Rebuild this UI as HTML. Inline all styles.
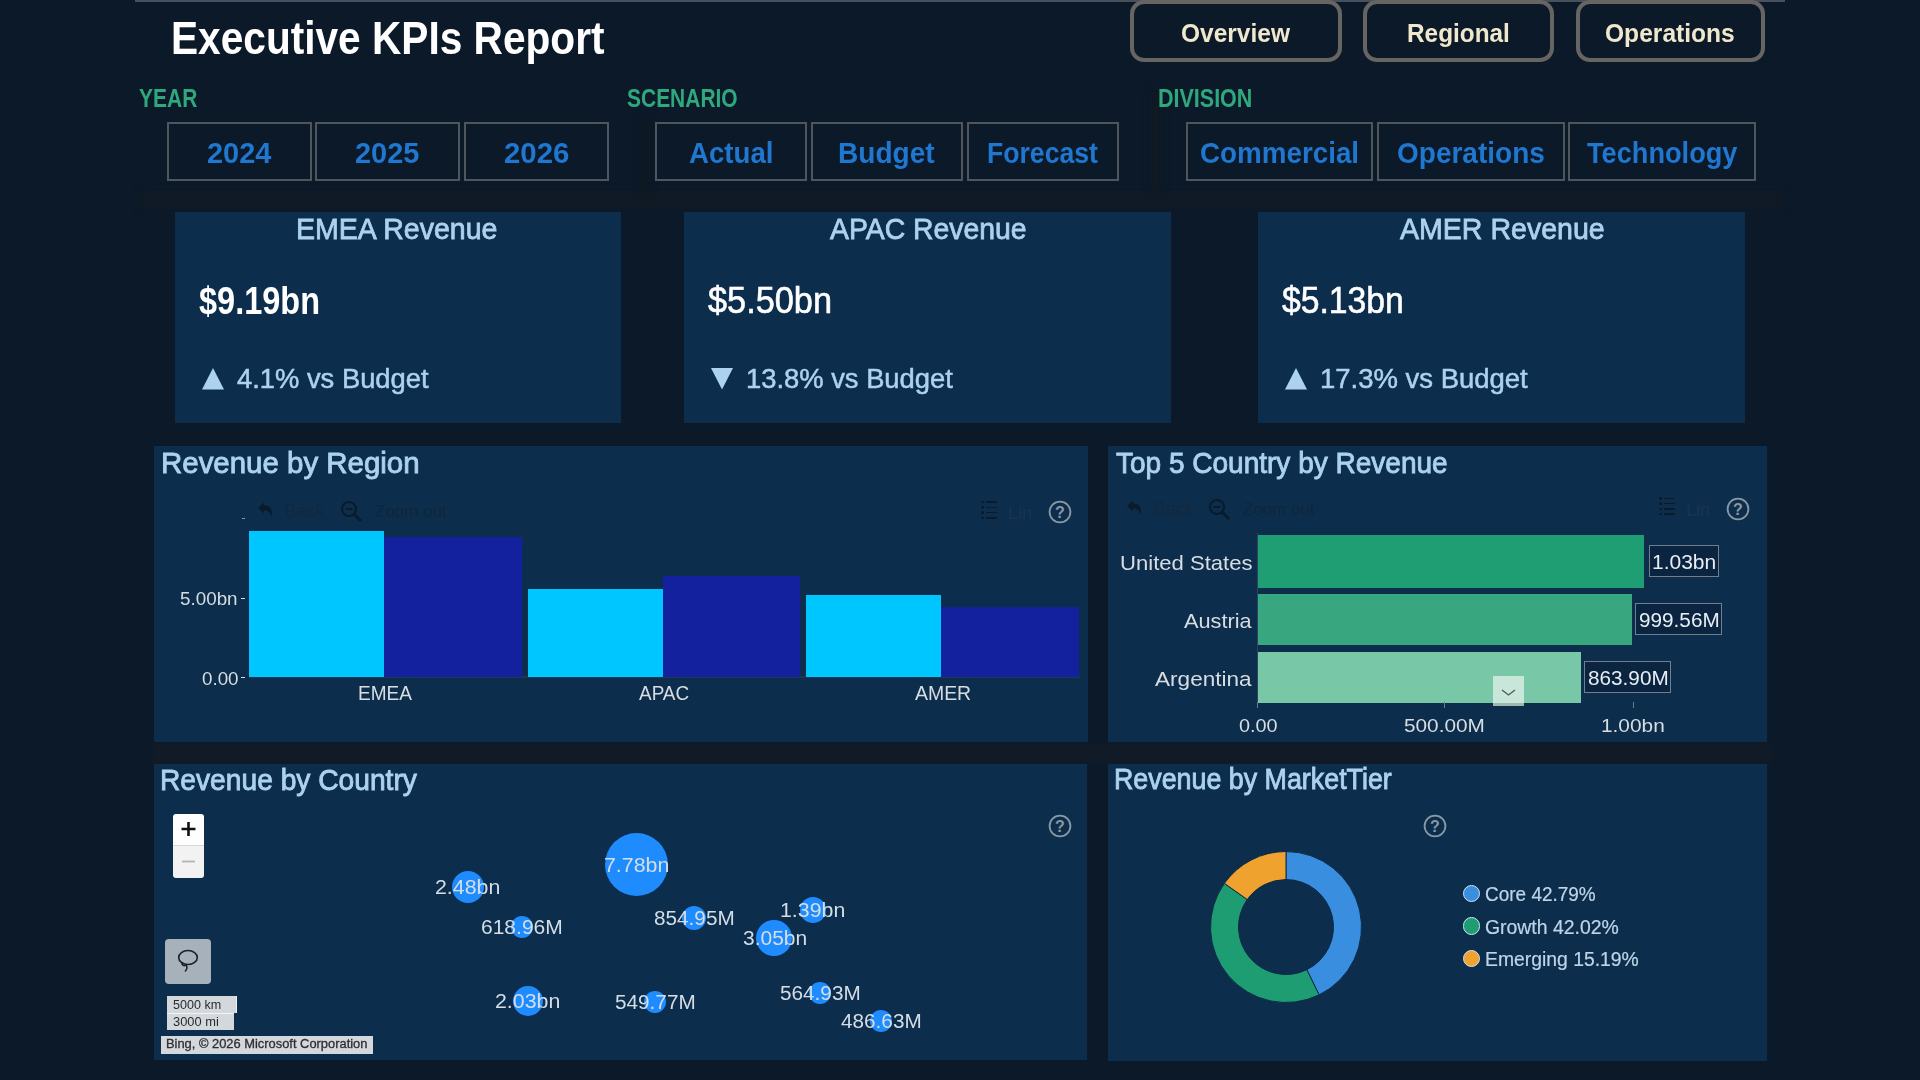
<!DOCTYPE html>
<html><head><meta charset="utf-8"><style>
html,body{margin:0;padding:0;}
body{width:1920px;height:1080px;overflow:hidden;position:relative;background:#0b1929;font-family:"Liberation Sans", sans-serif;}
.t{position:absolute;white-space:nowrap;line-height:1;transform-origin:0 0;}
</style></head><body>
<div style="position:absolute;left:135px;top:0px;width:1650px;height:2px;background:#46515c;"></div><div style="position:absolute;left:139px;top:191px;width:1646px;height:17px;background:#101a25;filter:blur(3px)"></div><div style="position:absolute;left:639px;top:116px;width:11px;height:76px;background:#0f1923;filter:blur(3px)"></div><div style="position:absolute;left:1150px;top:90px;width:12px;height:102px;background:#0f1923;filter:blur(3px)"></div><div style="position:absolute;left:1130px;top:0px;width:204px;height:54px;border:4px solid #676562;border-radius:14px;"></div><div style="position:absolute;left:1363px;top:0px;width:183px;height:54px;border:4px solid #676562;border-radius:14px;"></div><div style="position:absolute;left:1576px;top:0px;width:181px;height:54px;border:4px solid #676562;border-radius:14px;"></div><div style="position:absolute;left:167px;top:122px;width:141px;height:55px;border:2px solid #50565d;"></div><div style="position:absolute;left:315px;top:122px;width:141px;height:55px;border:2px solid #50565d;"></div><div style="position:absolute;left:464px;top:122px;width:141px;height:55px;border:2px solid #50565d;"></div><div style="position:absolute;left:655px;top:122px;width:148px;height:55px;border:2px solid #50565d;"></div><div style="position:absolute;left:811px;top:122px;width:148px;height:55px;border:2px solid #50565d;"></div><div style="position:absolute;left:967px;top:122px;width:148px;height:55px;border:2px solid #50565d;"></div><div style="position:absolute;left:1186px;top:122px;width:183px;height:55px;border:2px solid #50565d;"></div><div style="position:absolute;left:1377px;top:122px;width:184px;height:55px;border:2px solid #50565d;"></div><div style="position:absolute;left:1568px;top:122px;width:184px;height:55px;border:2px solid #50565d;"></div><div style="position:absolute;left:175px;top:212px;width:446px;height:211px;background:#0c2e4c;"></div><svg style="position:absolute;left:202.2px;top:367.5px" width="23" height="22"><polygon points="11,0 22,21.6 0,21.6" fill="#acd2f0"/></svg><div style="position:absolute;left:684px;top:212px;width:487px;height:211px;background:#0c2e4c;"></div><svg style="position:absolute;left:711.3px;top:367.7px" width="23" height="22"><polygon points="0,0 22,0 11,21.5" fill="#acd2f0"/></svg><div style="position:absolute;left:1258px;top:212px;width:487px;height:211px;background:#0c2e4c;"></div><svg style="position:absolute;left:1284.5px;top:367.5px" width="23" height="22"><polygon points="11,0 22,21.6 0,21.6" fill="#acd2f0"/></svg><div style="position:absolute;left:152px;top:742px;width:1620px;height:22px;background:#111b27;filter:blur(1.5px)"></div><div style="position:absolute;left:154px;top:446px;width:934px;height:296px;background:#0c2e4c;"></div><div style="position:absolute;left:1108px;top:446px;width:659px;height:296px;background:#0c2e4c;"></div><div style="position:absolute;left:154px;top:764px;width:933px;height:296px;background:#0c2e4c;"></div><div style="position:absolute;left:1108px;top:764px;width:659px;height:297px;background:#0c2e4c;"></div><div style="position:absolute;left:249px;top:676px;width:831px;height:2px;background:#1c3752;"></div><div style="position:absolute;left:249px;top:531px;width:135px;height:146px;background:#00c6ff;"></div><div style="position:absolute;left:384px;top:537px;width:138px;height:140px;background:#13219e;"></div><div style="position:absolute;left:528px;top:589px;width:135px;height:88px;background:#00c6ff;"></div><div style="position:absolute;left:663px;top:576px;width:137px;height:101px;background:#13219e;"></div><div style="position:absolute;left:806px;top:595px;width:135px;height:82px;background:#00c6ff;"></div><div style="position:absolute;left:941px;top:607px;width:138px;height:70px;background:#13219e;"></div><div style="position:absolute;left:241px;top:598px;width:4px;height:1px;background:#d8dde2;"></div><div style="position:absolute;left:241px;top:677px;width:4px;height:1px;background:#d8dde2;"></div><div style="position:absolute;left:1257px;top:535px;width:387px;height:53px;background:#1e9e72;"></div><div style="position:absolute;left:1257px;top:594px;width:375px;height:51px;background:#38a67e;"></div><div style="position:absolute;left:1257px;top:652px;width:324px;height:51px;background:#78c8a8;"></div><div style="position:absolute;left:1257px;top:533px;width:1px;height:174px;background:#2b4460;"></div><div style="position:absolute;left:1444px;top:702px;width:1px;height:6px;background:#6a7d90;"></div><div style="position:absolute;left:1633px;top:702px;width:1px;height:6px;background:#6a7d90;"></div><div style="position:absolute;left:1257px;top:702px;width:1px;height:6px;background:#6a7d90;"></div><div style="position:absolute;left:1649px;top:545px;width:68px;height:30px;border:1px solid #6f7f8e;background:#0b2440"></div><div style="position:absolute;left:1635px;top:603px;width:85px;height:30px;border:1px solid #6f7f8e;background:#0b2440"></div><div style="position:absolute;left:1584px;top:661px;width:85px;height:30px;border:1px solid #6f7f8e;background:#0b2440"></div><div style="position:absolute;left:452px;top:871px;width:32px;height:32px;border-radius:50%;background:#1e8cff"></div><div style="position:absolute;left:511px;top:916px;width:22px;height:22px;border-radius:50%;background:#1e8cff"></div><div style="position:absolute;left:513px;top:986px;width:30px;height:30px;border-radius:50%;background:#1e8cff"></div><div style="position:absolute;left:605.0px;top:833.0px;width:63.0px;height:63.0px;border-radius:50%;background:#1e8cff"></div><div style="position:absolute;left:682px;top:906px;width:24px;height:24px;border-radius:50%;background:#1e8cff"></div><div style="position:absolute;left:800px;top:896.5px;width:26px;height:26px;border-radius:50%;background:#1e8cff"></div><div style="position:absolute;left:756px;top:919.5px;width:36px;height:36px;border-radius:50%;background:#1e8cff"></div><div style="position:absolute;left:644px;top:991px;width:22px;height:22px;border-radius:50%;background:#1e8cff"></div><div style="position:absolute;left:809px;top:982px;width:22px;height:22px;border-radius:50%;background:#1e8cff"></div><div style="position:absolute;left:870px;top:1010px;width:22px;height:22px;border-radius:50%;background:#1e8cff"></div><svg style="position:absolute;left:1186px;top:827px" width="200" height="200" viewBox="-100 -100 200 200"><path d="M0.00,-75.50 A75.5,75.5 0 0 1 33.10,67.86 L20.82,42.69 A47.5,47.5 0 0 0 0.00,-47.50 Z" fill="#3a8ee0" stroke="#0c2a46" stroke-width="1"/><path d="M33.10,67.86 A75.5,75.5 0 0 1 -61.62,-43.63 L-38.77,-27.45 A47.5,47.5 0 0 0 20.82,42.69 Z" fill="#1f9d72" stroke="#0c2a46" stroke-width="1"/><path d="M-61.62,-43.63 A75.5,75.5 0 0 1 -0.00,-75.50 L-0.00,-47.50 A47.5,47.5 0 0 0 -38.77,-27.45 Z" fill="#f0a22e" stroke="#0c2a46" stroke-width="1"/></svg><div style="position:absolute;left:1463px;top:884.6999999999999px;width:15.2px;height:15.2px;border-radius:50%;background:#3a8ee0;border:1.5px solid #cfe2f2"></div><div style="position:absolute;left:1463px;top:917.4px;width:15.2px;height:15.2px;border-radius:50%;background:#1f9d72;border:1.5px solid #cfe2f2"></div><div style="position:absolute;left:1463px;top:949.9px;width:15.2px;height:15.2px;border-radius:50%;background:#f0a22e;border:1.5px solid #cfe2f2"></div><svg style="position:absolute;left:1047.3px;top:498.8px" width="26" height="26"><circle cx="13" cy="13" r="10.4" fill="none" stroke="#8a98a4" stroke-width="1.8"/><text x="13" y="19" text-anchor="middle" font-family="Liberation Sans" font-weight="700" font-size="16" fill="#8a98a4">?</text></svg><svg style="position:absolute;left:1725px;top:496px" width="26" height="26"><circle cx="13" cy="13" r="10.4" fill="none" stroke="#8a98a4" stroke-width="1.8"/><text x="13" y="19" text-anchor="middle" font-family="Liberation Sans" font-weight="700" font-size="16" fill="#8a98a4">?</text></svg><svg style="position:absolute;left:1047px;top:813px" width="26" height="26"><circle cx="13" cy="13" r="10.4" fill="none" stroke="#8a98a4" stroke-width="1.8"/><text x="13" y="19" text-anchor="middle" font-family="Liberation Sans" font-weight="700" font-size="16" fill="#8a98a4">?</text></svg><svg style="position:absolute;left:1422px;top:812.5px" width="26" height="26"><circle cx="13" cy="13" r="10.4" fill="none" stroke="#8a98a4" stroke-width="1.8"/><text x="13" y="19" text-anchor="middle" font-family="Liberation Sans" font-weight="700" font-size="16" fill="#8a98a4">?</text></svg><svg style="position:absolute;left:256px;top:501px" width="20" height="20" viewBox="0 0 20 20"><path d="M2,7 L8,1.5 L8,4.5 C14,4.5 17,8 16,16 C14,11 12,9.5 8,9.5 L8,12.5 Z" fill="#0a1b2c"/></svg><div style="position:absolute;left:285px;top:502px;font-family:Liberation Sans;font-size:18px;line-height:1;color:#122840">Back</div><svg style="position:absolute;left:340px;top:500px" width="24" height="22" viewBox="0 0 24 22"><circle cx="9" cy="9" r="7" fill="none" stroke="#0a1b2c" stroke-width="2.2"/><path d="M5.5,9 H12.5" stroke="#0a1b2c" stroke-width="2"/><path d="M14,14 L21,21" stroke="#0a1b2c" stroke-width="3"/></svg><div style="position:absolute;left:375px;top:503px;font-family:Liberation Sans;font-size:17px;line-height:1;color:#0f263d">Zoom out</div><svg style="position:absolute;left:1125px;top:499px" width="20" height="20" viewBox="0 0 20 20"><path d="M2,7 L8,1.5 L8,4.5 C14,4.5 17,8 16,16 C14,11 12,9.5 8,9.5 L8,12.5 Z" fill="#0a1b2c"/></svg><div style="position:absolute;left:1154px;top:500px;font-family:Liberation Sans;font-size:18px;line-height:1;color:#122840">Back</div><svg style="position:absolute;left:1208px;top:498px" width="24" height="22" viewBox="0 0 24 22"><circle cx="9" cy="9" r="7" fill="none" stroke="#0a1b2c" stroke-width="2.2"/><path d="M5.5,9 H12.5" stroke="#0a1b2c" stroke-width="2"/><path d="M14,14 L21,21" stroke="#0a1b2c" stroke-width="3"/></svg><div style="position:absolute;left:1243px;top:501px;font-family:Liberation Sans;font-size:17px;line-height:1;color:#0f263d">Zoom out</div><div style="position:absolute;left:981px;top:500.7px;width:2.5px;height:2.5px;background:#0a1b2c;border-radius:50%"></div><div style="position:absolute;left:986px;top:501.2px;width:11px;height:1.6px;background:#0a1b2c"></div><div style="position:absolute;left:981px;top:506.0px;width:2.5px;height:2.5px;background:#0a1b2c;border-radius:50%"></div><div style="position:absolute;left:986px;top:506.5px;width:11px;height:1.6px;background:#0a1b2c"></div><div style="position:absolute;left:981px;top:511.29999999999995px;width:2.5px;height:2.5px;background:#0a1b2c;border-radius:50%"></div><div style="position:absolute;left:986px;top:511.79999999999995px;width:11px;height:1.6px;background:#0a1b2c"></div><div style="position:absolute;left:981px;top:516.6px;width:2.5px;height:2.5px;background:#0a1b2c;border-radius:50%"></div><div style="position:absolute;left:986px;top:517.1px;width:11px;height:1.6px;background:#0a1b2c"></div><div style="position:absolute;left:1008px;top:504.2px;font-family:Liberation Sans;font-size:18px;line-height:1;color:#1a3350">Lin</div><div style="position:absolute;left:1659px;top:497.0px;width:2.5px;height:2.5px;background:#0a1b2c;border-radius:50%"></div><div style="position:absolute;left:1664px;top:497.5px;width:11px;height:1.6px;background:#0a1b2c"></div><div style="position:absolute;left:1659px;top:502.3px;width:2.5px;height:2.5px;background:#0a1b2c;border-radius:50%"></div><div style="position:absolute;left:1664px;top:502.8px;width:11px;height:1.6px;background:#0a1b2c"></div><div style="position:absolute;left:1659px;top:507.6px;width:2.5px;height:2.5px;background:#0a1b2c;border-radius:50%"></div><div style="position:absolute;left:1664px;top:508.1px;width:11px;height:1.6px;background:#0a1b2c"></div><div style="position:absolute;left:1659px;top:512.9px;width:2.5px;height:2.5px;background:#0a1b2c;border-radius:50%"></div><div style="position:absolute;left:1664px;top:513.4px;width:11px;height:1.6px;background:#0a1b2c"></div><div style="position:absolute;left:1686px;top:500.5px;font-family:Liberation Sans;font-size:18px;line-height:1;color:#1a3350">Lin</div><div style="position:absolute;left:242px;top:518px;width:3px;height:1px;background:#8a98a4;"></div><div style="position:absolute;left:173px;top:814px;width:31px;height:64px;background:linear-gradient(#fefefe 0 31px,#f2f2f2 31px);border-radius:3px"></div><div style="position:absolute;left:173px;top:845px;width:31px;height:1px;background:#d6d6d6;"></div><svg style="position:absolute;left:173px;top:814px" width="31" height="64"><path d="M15.5,8 V22 M8.5,15 H22.5" stroke="#111" stroke-width="2.6"/><path d="M9,47.5 H22" stroke="#b4b4b4" stroke-width="1.8"/></svg><div style="position:absolute;left:165px;top:939px;width:46px;height:45px;background:#a7b1bb;border-radius:4px"></div><svg style="position:absolute;left:165px;top:939px" width="46" height="45"><ellipse cx="23" cy="18.5" rx="9.3" ry="7" fill="none" stroke="#1b1f24" stroke-width="1.6"/><path d="M17.5,23 C16,26 19,27.5 21,26 C22.5,28 22,30.5 20,32.5" fill="none" stroke="#1b1f24" stroke-width="1.5"/></svg><div style="position:absolute;left:167px;top:996px;width:69.5px;height:17px;background:#d3d8dd;border-right:1px solid #f0f0f0;box-sizing:border-box"></div><div style="position:absolute;left:167px;top:1013px;width:66.5px;height:17px;background:#d3d8dd;border-top:1px solid #f4f4f4;box-sizing:border-box"></div><div style="position:absolute;left:161px;top:1036px;width:212px;height:18px;background:#d3d8dd;"></div><div style="position:absolute;left:1493px;top:676px;width:31px;height:30px;background:#c9e6da"></div><div style="position:absolute;left:1493px;top:703px;width:31px;height:3px;background:#9fb8ae;"></div><svg style="position:absolute;left:1493px;top:676px" width="31" height="30"><path d="M9,14 L15.5,19 L22,14" fill="none" stroke="#4a5a55" stroke-width="1.2"/></svg>
<div class="t" style="left:1180.66px;top:20.29px;font-size:26px;color:#efe8cd;font-weight:700;transform:scaleX(0.9428);">Overview</div><div class="t" style="left:1407.16px;top:20.29px;font-size:26px;color:#efe8cd;font-weight:700;transform:scaleX(0.9371);">Regional</div><div class="t" style="left:1605.35px;top:20.29px;font-size:26px;color:#efe8cd;font-weight:700;transform:scaleX(0.9456);">Operations</div><div class="t" style="left:170.61px;top:14.01px;font-size:47px;color:#ffffff;font-weight:700;transform:scaleX(0.8644);">Executive KPIs Report</div><div class="t" style="left:139.10px;top:86.44px;font-size:25px;color:#2ea87c;font-weight:700;transform:scaleX(0.8400);">YEAR</div><div class="t" style="left:627.30px;top:86.34px;font-size:25px;color:#2ea87c;font-weight:700;transform:scaleX(0.8387);">SCENARIO</div><div class="t" style="left:1157.94px;top:86.34px;font-size:25px;color:#2ea87c;font-weight:700;transform:scaleX(0.8599);">DIVISION</div><div class="t" style="left:206.52px;top:137.83px;font-size:29.5px;color:#1f77d0;font-weight:700;transform:scaleX(0.9813);">2024</div><div class="t" style="left:355.02px;top:137.83px;font-size:29.5px;color:#1f77d0;font-weight:700;transform:scaleX(0.9810);">2025</div><div class="t" style="left:503.50px;top:137.83px;font-size:29.5px;color:#1f77d0;font-weight:700;transform:scaleX(0.9966);">2026</div><div class="t" style="left:689.30px;top:137.83px;font-size:29.5px;color:#1f77d0;font-weight:700;transform:scaleX(0.9375);">Actual</div><div class="t" style="left:838.15px;top:137.83px;font-size:29.5px;color:#1f77d0;font-weight:700;transform:scaleX(0.9507);">Budget</div><div class="t" style="left:987.00px;top:137.83px;font-size:29.5px;color:#1f77d0;font-weight:700;transform:scaleX(0.9022);">Forecast</div><div class="t" style="left:1200.06px;top:137.83px;font-size:29.5px;color:#1f77d0;font-weight:700;transform:scaleX(0.9419);">Commercial</div><div class="t" style="left:1396.80px;top:137.83px;font-size:29.5px;color:#1f77d0;font-weight:700;transform:scaleX(0.9493);">Operations</div><div class="t" style="left:1586.50px;top:137.83px;font-size:29.5px;color:#1f77d0;font-weight:700;transform:scaleX(0.9211);">Technology</div><div class="t" style="left:295.90px;top:214.41px;font-size:30px;color:#acd2f0;font-weight:400;transform:scaleX(0.9513);-webkit-text-stroke:0.8px #acd2f0">EMEA Revenue</div><div class="t" style="left:198.60px;top:281.49px;font-size:39px;color:#ffffff;font-weight:700;transform:scaleX(0.8332);">$9.19bn</div><div class="t" style="left:237.30px;top:366.14px;font-size:27px;color:#acd2f0;font-weight:400;transform:scaleX(1.0131);-webkit-text-stroke:0.5px #acd2f0">4.1% vs Budget</div><div class="t" style="left:830.00px;top:214.41px;font-size:30px;color:#acd2f0;font-weight:400;transform:scaleX(0.9459);-webkit-text-stroke:0.8px #acd2f0">APAC Revenue</div><div class="t" style="left:707.80px;top:282.06px;font-size:37.5px;color:#ffffff;font-weight:400;transform:scaleX(0.9148);-webkit-text-stroke:0.6px #fff">$5.50bn</div><div class="t" style="left:746.47px;top:366.14px;font-size:27px;color:#acd2f0;font-weight:400;transform:scaleX(1.0132);-webkit-text-stroke:0.5px #acd2f0">13.8% vs Budget</div><div class="t" style="left:1400.00px;top:214.41px;font-size:30px;color:#acd2f0;font-weight:400;transform:scaleX(0.9514);-webkit-text-stroke:0.8px #acd2f0">AMER Revenue</div><div class="t" style="left:1282.00px;top:281.86px;font-size:37.5px;color:#ffffff;font-weight:400;transform:scaleX(0.8990);-webkit-text-stroke:0.6px #fff">$5.13bn</div><div class="t" style="left:1319.76px;top:366.14px;font-size:27px;color:#acd2f0;font-weight:400;transform:scaleX(1.0176);-webkit-text-stroke:0.5px #acd2f0">17.3% vs Budget</div><div class="t" style="left:160.54px;top:448.31px;font-size:30px;color:#acd2f0;font-weight:400;transform:scaleX(0.9814);-webkit-text-stroke:0.9px #acd2f0">Revenue by Region</div><div class="t" style="left:1116.30px;top:448.11px;font-size:30px;color:#acd2f0;font-weight:400;transform:scaleX(0.9336);-webkit-text-stroke:0.9px #acd2f0">Top 5 Country by Revenue</div><div class="t" style="left:159.62px;top:764.61px;font-size:30px;color:#acd2f0;font-weight:400;transform:scaleX(0.9393);-webkit-text-stroke:0.9px #acd2f0">Revenue by Country</div><div class="t" style="left:1114.21px;top:763.61px;font-size:30px;color:#acd2f0;font-weight:400;transform:scaleX(0.8941);-webkit-text-stroke:0.9px #acd2f0">Revenue by MarketTier</div><div class="t" style="left:180.00px;top:589.42px;font-size:19px;color:#d8dde2;font-weight:400;transform:scaleX(0.9905);">5.00bn</div><div class="t" style="left:201.50px;top:668.92px;font-size:19px;color:#d8dde2;font-weight:400;transform:scaleX(0.9887);">0.00</div><div class="t" style="left:357.59px;top:682.22px;font-size:21px;color:#d8dde2;font-weight:400;transform:scaleX(0.9059);">EMEA</div><div class="t" style="left:639.00px;top:682.22px;font-size:21px;color:#d8dde2;font-weight:400;transform:scaleX(0.9015);">APAC</div><div class="t" style="left:915.00px;top:682.22px;font-size:21px;color:#d8dde2;font-weight:400;transform:scaleX(0.9255);">AMER</div><div class="t" style="left:1119.95px;top:552.22px;font-size:21px;color:#d8dde2;font-weight:400;transform:scaleX(1.0516);">United States</div><div class="t" style="left:1184.00px;top:610.22px;font-size:21px;color:#d8dde2;font-weight:400;transform:scaleX(1.0353);">Austria</div><div class="t" style="left:1155.00px;top:668.22px;font-size:21px;color:#d8dde2;font-weight:400;transform:scaleX(1.0752);">Argentina</div><div class="t" style="left:1239.00px;top:715.92px;font-size:19px;color:#d8dde2;font-weight:400;transform:scaleX(1.0436);">0.00</div><div class="t" style="left:1404.00px;top:715.92px;font-size:19px;color:#d8dde2;font-weight:400;transform:scaleX(1.0942);">500.00M</div><div class="t" style="left:1600.90px;top:715.92px;font-size:19px;color:#d8dde2;font-weight:400;transform:scaleX(1.0964);">1.00bn</div><div class="t" style="left:1651.95px;top:551.57px;font-size:20px;color:#e8eef4;font-weight:400;transform:scaleX(1.0500);">1.03bn</div><div class="t" style="left:1638.50px;top:609.57px;font-size:20px;color:#e8eef4;font-weight:400;transform:scaleX(1.0366);">999.56M</div><div class="t" style="left:1587.50px;top:667.57px;font-size:20px;color:#e8eef4;font-weight:400;transform:scaleX(1.0366);">863.90M</div><div class="t" style="left:435.43px;top:877.07px;font-size:20px;color:#d5dee7;font-weight:400;transform:scaleX(1.0669);">2.48bn</div><div class="t" style="left:480.95px;top:917.07px;font-size:20px;color:#d5dee7;font-weight:400;transform:scaleX(1.0503);">618.96M</div><div class="t" style="left:495.43px;top:991.07px;font-size:20px;color:#d5dee7;font-weight:400;transform:scaleX(1.0669);">2.03bn</div><div class="t" style="left:603.93px;top:854.57px;font-size:20px;color:#d5dee7;font-weight:400;transform:scaleX(1.0669);">7.78bn</div><div class="t" style="left:654.00px;top:908.07px;font-size:20px;color:#d5dee7;font-weight:400;transform:scaleX(1.0366);">854.95M</div><div class="t" style="left:780.43px;top:899.57px;font-size:20px;color:#d5dee7;font-weight:400;transform:scaleX(1.0669);">1.39bn</div><div class="t" style="left:742.50px;top:927.57px;font-size:20px;color:#d5dee7;font-weight:400;transform:scaleX(1.0491);">3.05bn</div><div class="t" style="left:615.00px;top:992.07px;font-size:20px;color:#d5dee7;font-weight:400;transform:scaleX(1.0366);">549.77M</div><div class="t" style="left:780.00px;top:983.07px;font-size:20px;color:#d5dee7;font-weight:400;transform:scaleX(1.0366);">564.93M</div><div class="t" style="left:841.00px;top:1011.07px;font-size:20px;color:#d5dee7;font-weight:400;transform:scaleX(1.0366);">486.63M</div><div class="t" style="left:1485.05px;top:883.87px;font-size:20px;color:#bfd4e8;font-weight:400;transform:scaleX(0.9486);-webkit-text-stroke:0.2px #bfd4e8">Core 42.79%</div><div class="t" style="left:1485.03px;top:916.57px;font-size:20px;color:#bfd4e8;font-weight:400;transform:scaleX(0.9703);-webkit-text-stroke:0.2px #bfd4e8">Growth 42.02%</div><div class="t" style="left:1485.03px;top:949.07px;font-size:20px;color:#bfd4e8;font-weight:400;transform:scaleX(0.9671);-webkit-text-stroke:0.2px #bfd4e8">Emerging 15.19%</div><div class="t" style="left:173.00px;top:999.07px;font-size:12.2px;color:#2a2a2a;font-weight:400;transform:scaleX(1.0302);">5000 km</div><div class="t" style="left:173.00px;top:1015.97px;font-size:12.2px;color:#2a2a2a;font-weight:400;transform:scaleX(1.0551);">3000 mi</div><div class="t" style="left:165.98px;top:1037.83px;font-size:12.6px;color:#2e2e2e;font-weight:400;transform:scaleX(1.0231);-webkit-text-stroke:0.3px #2e2e2e">Bing, © 2026 Microsoft Corporation</div>
</body></html>
